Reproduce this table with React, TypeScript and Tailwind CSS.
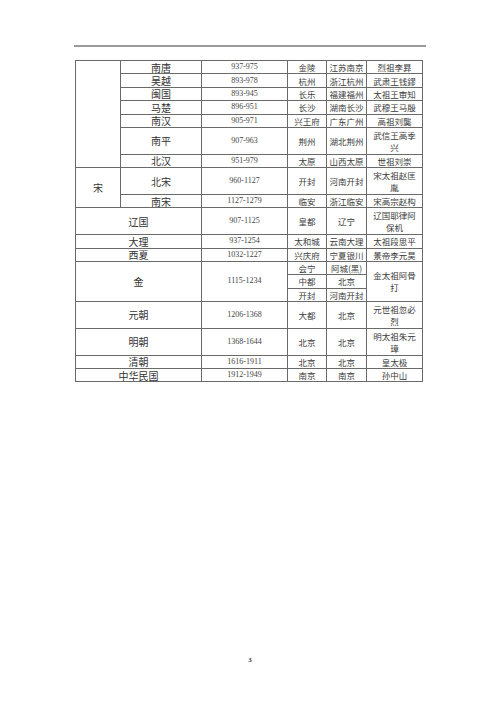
import React from "react";

const cjk = "font-['Noto_Sans_CJK_SC',sans-serif]";
const num = "font-['Liberation_Serif',serif]";

type Row = {
  name: string;
  years: string;
  capital: string;
  today: string;
  founder: React.ReactNode;
  tall?: boolean;
};

const single = "h-[13.4px]";
const double = "h-[26.8px]";

function Name({ children, colSpan, rowSpan }: { children: React.ReactNode; colSpan?: number; rowSpan?: number }) {
  return (
    <td colSpan={colSpan} rowSpan={rowSpan} className={`border border-[#6a6a6a] p-0 text-center align-middle text-[10px] leading-[11px] text-[#333] ${cjk}`}>
      {children}
    </td>
  );
}

function Years({ children, rowSpan }: { children: React.ReactNode; rowSpan?: number }) {
  return (
    <td rowSpan={rowSpan} className={`border border-[#6a6a6a] p-0 text-center align-middle text-[8px] leading-none text-[#444] ${num}`}>
      {children}
    </td>
  );
}

function Small({ children, rowSpan }: { children: React.ReactNode; rowSpan?: number }) {
  return (
    <td rowSpan={rowSpan} className={`border border-[#6a6a6a] p-0 text-center align-middle text-[8.5px] leading-[12px] text-[#3a3a3a] ${cjk}`}>
      {children}
    </td>
  );
}

function Tail({ r }: { r: Row }) {
  return (
    <>
      <Years>{r.years}</Years>
      <Small>{r.capital}</Small>
      <Small>{r.today}</Small>
      <Small>{r.founder}</Small>
    </>
  );
}

const fiveDynasties: Row[] = [
  { name: "南唐", years: "937-975", capital: "金陵", today: "江苏南京", founder: "烈祖李昪" },
  { name: "吴越", years: "893-978", capital: "杭州", today: "浙江杭州", founder: "武肃王钱鏐" },
  { name: "闽国", years: "893-945", capital: "长乐", today: "福建福州", founder: "太祖王审知" },
  { name: "马楚", years: "896-951", capital: "长沙", today: "湖南长沙", founder: "武穆王马殷" },
  { name: "南汉", years: "905-971", capital: "兴王府", today: "广东广州", founder: "高祖刘龑" },
  { name: "南平", years: "907-963", capital: "荆州", today: "湖北荆州", founder: <>武信王高季<br />兴</>, tall: true },
  { name: "北汉", years: "951-979", capital: "太原", today: "山西太原", founder: "世祖刘崇" },
];

const later: Row[] = [
  { name: "辽国", years: "907-1125", capital: "皇都", today: "辽宁", founder: <>辽国耶律阿<br />保机</>, tall: true },
  { name: "大理", years: "937-1254", capital: "太和城", today: "云南大理", founder: "太祖段思平" },
  { name: "西夏", years: "1032-1227", capital: "兴庆府", today: "宁夏银川", founder: "景帝李元昊" },
];

const last: Row[] = [
  { name: "元朝", years: "1206-1368", capital: "大都", today: "北京", founder: <>元世祖忽必<br />烈</>, tall: true },
  { name: "明朝", years: "1368-1644", capital: "北京", today: "北京", founder: <>明太祖朱元<br />璋</>, tall: true },
  { name: "清朝", years: "1616-1911", capital: "北京", today: "北京", founder: "皇太极" },
  { name: "中华民国", years: "1912-1949", capital: "南京", today: "南京", founder: "孙中山" },
];

export default function App() {
  return (
    <div className="flex h-[707px] w-[500px] flex-col bg-white">
      <div className="ml-[74px] mt-[45px] h-[2px] w-[352px] bg-[#9a9a9a]" />
      <table className="ml-[75px] mt-[13px] w-[347px] table-fixed border-collapse border border-[#6a6a6a]">
        <colgroup>
          <col className="w-[45px]" />
          <col className="w-[81px]" />
          <col className="w-[86px]" />
          <col className="w-[39px]" />
          <col className="w-[40px]" />
          <col className="w-[56px]" />
        </colgroup>
        <tbody>
          {fiveDynasties.map((r, i) => (
            <tr key={r.name} className={r.tall ? double : single}>
              {i === 0 && <td rowSpan={7} className="border border-[#6a6a6a] p-0" />}
              <Name>{r.name}</Name>
              <Tail r={r} />
            </tr>
          ))}
          <tr className={double}>
            <Name rowSpan={2}>宋</Name>
            <Name>北宋</Name>
            <Tail r={{ name: "北宋", years: "960-1127", capital: "开封", today: "河南开封", founder: <>宋太祖赵匡<br />胤</> }} />
          </tr>
          <tr className={single}>
            <Name>南宋</Name>
            <Tail r={{ name: "南宋", years: "1127-1279", capital: "临安", today: "浙江临安", founder: "宋高宗赵构" }} />
          </tr>
          {later.map((r) => (
            <tr key={r.name} className={r.tall ? double : single}>
              <Name colSpan={2}>{r.name}</Name>
              <Tail r={r} />
            </tr>
          ))}
          <tr className={single}>
            <Name colSpan={2} rowSpan={3}>金</Name>
            <Years rowSpan={3}>1115-1234</Years>
            <Small>会宁</Small>
            <Small>阿城(黑)</Small>
            <Small rowSpan={3}>金太祖阿骨<br />打</Small>
          </tr>
          <tr className={single}>
            <Small>中都</Small>
            <Small>北京</Small>
          </tr>
          <tr className={single}>
            <Small>开封</Small>
            <Small>河南开封</Small>
          </tr>
          {last.map((r) => (
            <tr key={r.name} className={r.tall ? double : single}>
              <Name colSpan={2}>{r.name}</Name>
              <Tail r={r} />
            </tr>
          ))}
        </tbody>
      </table>
      <div className={`mt-auto mb-[43px] text-center text-[7px] font-bold leading-none text-[#333] ${num}`}>3</div>
    </div>
  );
}
